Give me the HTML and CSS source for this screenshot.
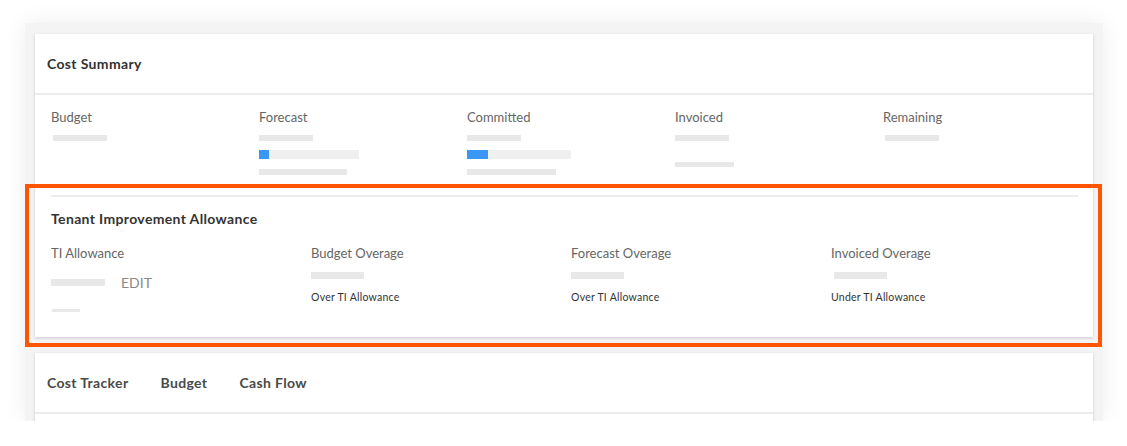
FILE: index.html
```html
<!DOCTYPE html>
<html>
<head>
<title>Cost Summary</title>
<meta charset="utf-8">
<link rel="stylesheet" href="styles.css">
</head>
<body>
<div class="frame">
	<div class="card summary">
		<div class="card-hd">Cost Summary</div>
		<div class="stats">
			<div class="stat">
				<p class="label">Budget</p>
				<div class="ph ph-a inset"></div>
			</div>
			<div class="stat">
				<p class="label">Forecast</p>
				<div class="ph ph-a"></div>
				<div class="progress" style="width: 100px;"><span style="width: 10px;"></span></div>
				<div class="ph ph-c" style="width: 88px;"></div>
			</div>
			<div class="stat">
				<p class="label">Committed</p>
				<div class="ph ph-a"></div>
				<div class="progress" style="width: 104px;"><span style="width: 21px;"></span></div>
				<div class="ph ph-c" style="width: 89px;"></div>
			</div>
			<div class="stat">
				<p class="label">Invoiced</p>
				<div class="ph ph-a"></div>
				<div class="ph ph-b"></div>
			</div>
			<div class="stat">
				<p class="label">Remaining</p>
				<div class="ph ph-a inset"></div>
			</div>
		</div>
		<div class="ti">
			<h3 class="ti-title">Tenant Improvement Allowance</h3>
			<div class="ti-cols">
				<div class="ti-col">
					<p class="label">TI Allowance</p>
					<div class="edit-row">
						<div class="ph ph-edit"></div>
						<a href="#" class="edit">EDIT</a>
					</div>
					<div class="ph ph-small"></div>
				</div>
				<div class="ti-col">
					<p class="label">Budget Overage</p>
					<div class="ph ph-ovr"></div>
					<p class="note">Over TI Allowance</p>
				</div>
				<div class="ti-col">
					<p class="label">Forecast Overage</p>
					<div class="ph ph-ovr"></div>
					<p class="note">Over TI Allowance</p>
				</div>
				<div class="ti-col">
					<p class="label">Invoiced Overage</p>
					<div class="ph ph-ovr shift"></div>
					<p class="note">Under TI Allowance</p>
				</div>
			</div>
		</div>
	</div>
	<div class="card tracker">
		<div class="tabs">
			<a href="#">Cost Tracker</a>
			<a href="#">Budget</a>
			<a href="#">Cash Flow</a>
		</div>
	</div>
	<div class="highlight"></div>
</div>
</body>
</html>
```

FILE: styles.css
```css
body, p, h3, div { margin: 0; padding: 0; }
body { background: #fff; font-family: Lato, "Open Sans", "Liberation Sans", sans-serif; color: #333; }
a { text-decoration: none; }

/* screenshot frame */
.frame { position: relative; width: 1078px; height: 398px; margin: 23px 0 0 25px; padding: 11px 10px 0 10px; box-sizing: border-box; background: #f4f4f4; overflow: hidden; box-shadow: 0 0 22px rgba(0,0,0,0.07); }
.card { background: #fff; box-shadow: 0 1px 3px rgba(0,0,0,0.18); }

.card-hd { height: 59px; line-height: 59px; padding-left: 12px; font-size: 14px; font-weight: bold; letter-spacing: 0.35px; color: #333; border-bottom: 2px solid #ececec; }

.label { font-size: 13px; line-height: 16px; color: #666; }
.ph { background: #e8e8e8; }

.stats { display: grid; grid-template-columns: repeat(5, 208px); padding: 14px 0 20px 16px; }
.stat .ph-a { width: 54px; height: 6px; margin-top: 10px; }
.stat .ph-a.inset { margin-left: 2px; }
.stat .ph-b { width: 59px; height: 5px; margin: 21px 0 0 0; }
.stat .ph-c { height: 6px; margin-top: 10px; }
.progress { height: 9px; margin-top: 9px; background: #efefef; }
.progress span { display: block; height: 100%; background: #3a97f5; }

/* tenant improvement */
.ti { margin: 0 15px 0 16px; padding: 13px 0 25px; border-top: 2px solid #ececec; }
.ti-title { font-size: 14px; line-height: 18px; font-weight: bold; letter-spacing: 0.35px; color: #333; }
.ti-cols { display: grid; grid-template-columns: repeat(4, 260px); margin-top: 17px; }
.edit-row { display: flex; align-items: center; height: 18px; margin-top: 12px; }
.ph-edit { width: 54px; height: 7px; }
.edit { margin-left: 16px; font-size: 14px; color: #888; }
.ph-small { width: 28px; height: 3px; margin: 18px 0 0 1px; }
.ph-ovr { width: 53px; height: 7px; margin-top: 11px; }
.ph-ovr.shift { margin-left: 3px; }
.note { margin-top: 12px; font-size: 10.5px; line-height: 12px; color: #333; letter-spacing: 0.25px; }

.tracker { margin-top: 16px; height: 80px; }
.tabs { display: flex; align-items: center; height: 59px; padding-left: 12px; border-bottom: 2px solid #ececec; }
.tabs a { margin-right: 32px; font-size: 14px; font-weight: bold; letter-spacing: 0.35px; color: #4a4a4a; }

/* callout box drawn over the screenshot */
.highlight { position: absolute; left: 0; top: 161px; width: 1077px; height: 163px; border: 4px solid #ff5500; box-sizing: border-box; }
```
